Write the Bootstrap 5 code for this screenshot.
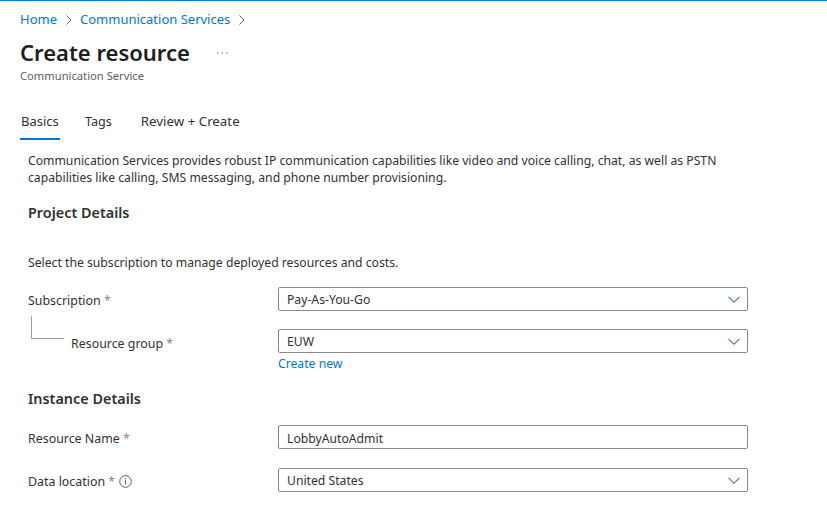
<!DOCTYPE html>
<html lang="en">
<head>
<meta charset="utf-8">
<title>Create resource</title>
<link href="https://cdn.jsdelivr.net/npm/bootstrap@5.3.0/dist/css/bootstrap.min.css" rel="stylesheet">
<style>
html,body{height:100%}
body{font-family:"Noto Sans","Open Sans","Liberation Sans",sans-serif;font-size:12.4px;color:#323130;background:#fff;border-top:1px solid #0078d4;overflow:hidden}
a{color:#0078d4;text-decoration:none}
.crumbs{padding:10px 20px 0;height:26px;line-height:17px;font-size:13px}
.crumbs svg{margin:0 8px 0 9px;vertical-align:-1px}
.page-title{font-size:22px;font-weight:600;line-height:30px;color:#201f1e;margin:0;position:relative;top:-1px}
.title-row{padding:0 20px;margin-top:11px;gap:27px}
.subtitle{padding:0 20px;font-size:11.2px;line-height:16px;color:#605e5c}
.tab-strip{padding:0 20px;margin-top:21px;height:36px;gap:25px}
.tab-item{color:#323130;font-size:12.6px;line-height:17px;padding-top:8px;height:35px}
.tab-item.on{border-bottom:2px solid #0078d4;font-size:13px;width:40px;padding-left:1px;white-space:nowrap}
.tab-item.wide{font-size:13.3px;margin-left:4px}
.form-wrap{padding:0 28px;margin-top:11px;width:776px}
.intro{line-height:17px;margin:0 0 17px;color:#323130;height:34px;font-size:12.2px;white-space:nowrap}
.sect{font-size:14.4px;font-weight:600;line-height:20px;color:#323130;margin:0}
.hint{line-height:17px;margin:31px 0 16px;font-size:12.2px}
.lbl{width:250px;flex:none;color:#323130;font-size:12.4px;line-height:17px;padding-top:3px}
.req{color:#a8787b}
.fld{width:470px;flex:none;position:relative}
.ctl,.ctl:focus{height:24px;min-height:24px;border:1px solid #8a8886;border-radius:2px;padding:2px 8px 0;font-size:12.2px;line-height:20px;color:#323130;box-shadow:none;background-color:#fff}
.form-select.ctl{background-image:url("data:image/svg+xml,%3Csvg xmlns='http://www.w3.org/2000/svg' viewBox='0 0 12 7'%3E%3Cpath d='M.5.8 6 6.2 11.5.8' fill='none' stroke='%23487ea8' stroke-width='1.1'/%3E%3C/svg%3E");background-size:12px 7px;background-position:right 7px center;background-repeat:no-repeat}
.tree-elbow{position:absolute;left:3px;top:29px;width:33px;height:23px;border-left:1px solid #a19f9d;border-bottom:1px solid #a19f9d}
.group-row{position:relative}
.next-row{margin-top:18px}
.lbl.indent{padding-left:43px;padding-top:5px}
.lbl.blank{padding-top:0}
.new-link{font-size:12.2px;line-height:17px;display:block;margin-top:2px}
.inst-head{margin-top:17px}
.name-row{margin-top:16px}
.loc-row{margin-top:19px}
.info-ic{vertical-align:-2px}
</style>
</head>
<body>
<nav class="crumbs"><a href="#">Home</a><svg width="6" height="10" viewBox="0 0 6 10"><path d="M.5.5 5 5 .5 9.5" fill="none" stroke="#605e5c"/></svg><a href="#">Communication Services</a><svg width="6" height="10" viewBox="0 0 6 10"><path d="M.5.5 5 5 .5 9.5" fill="none" stroke="#605e5c"/></svg></nav>
<div class="title-row d-flex align-items-center"><h1 class="page-title">Create resource</h1><svg width="11" height="3" viewBox="0 0 11 3"><path d="M0 1h1.4M4.6 1H6M9.2 1h1.4" stroke="#605e5c" fill="none"/></svg></div>
<div class="subtitle">Communication Service</div>
<div class="tab-strip d-flex"><div class="tab-item on">Basics</div><div class="tab-item">Tags</div><div class="tab-item wide">Review + Create</div></div>
<div class="form-wrap">
<p class="intro">Communication Services provides robust IP communication capabilities like video and voice calling, chat, as well as PSTN<br>capabilities like calling, SMS messaging, and phone number provisioning.</p>
<h2 class="sect">Project Details</h2>
<p class="hint">Select the subscription to manage deployed resources and costs.</p>
<div class="group-row">
<div class="d-flex align-items-center"><div class="lbl">Subscription <span class="req">*</span></div><div class="fld"><select class="form-select ctl"><option>Pay-As-You-Go</option></select></div></div>
<div class="tree-elbow"></div>
<div class="d-flex align-items-center next-row"><div class="lbl indent">Resource group <span class="req">*</span></div><div class="fld"><select class="form-select ctl"><option>EUW</option></select></div></div>
</div>
<div class="d-flex"><div class="lbl blank"></div><div class="fld"><a class="new-link" href="#">Create new</a></div></div>
<h2 class="sect inst-head">Instance Details</h2>
<div class="d-flex align-items-center name-row"><div class="lbl">Resource Name <span class="req">*</span></div><div class="fld"><input class="form-control ctl" value="LobbyAutoAdmit"></div></div>
<div class="d-flex align-items-center loc-row"><div class="lbl">Data location <span class="req">*</span><svg class="info-ic ms-1" width="13" height="13" viewBox="0 0 13 13"><circle cx="6.5" cy="6.5" r="5.8" fill="none" stroke="#605e5c"/><path d="M6.5 5.5v4" stroke="#605e5c"/><circle cx="6.5" cy="3.8" r=".7" fill="#605e5c"/></svg></div><div class="fld"><select class="form-select ctl"><option>United States</option></select></div></div>
</div>
<script src="https://cdn.jsdelivr.net/npm/bootstrap@5.3.0/dist/js/bootstrap.bundle.min.js"></script>
</body>
</html>
